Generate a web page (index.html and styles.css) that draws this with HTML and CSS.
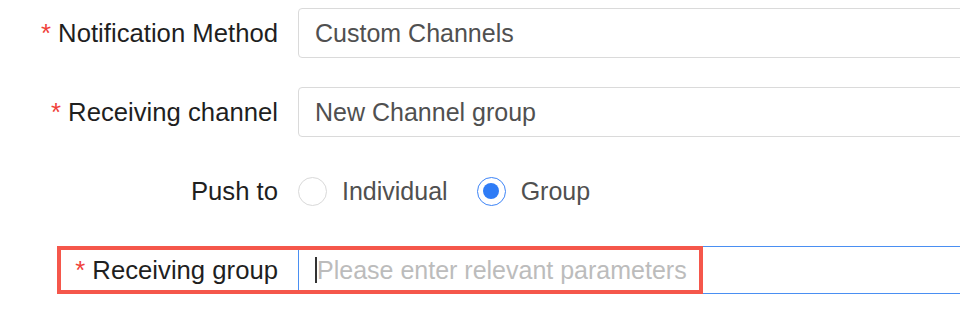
FILE: index.html
```html
<!DOCTYPE html>
<html>
<head>
    <title>Channel Settings</title>
    <link rel="stylesheet" href="styles.css">
</head>
<body>
    <form class="form">
        <div class="form-row">
            <label class="form-label"><span class="required">*</span>Notification Method</label>
            <div class="input">Custom Channels</div>
        </div>
        <div class="form-row">
            <label class="form-label"><span class="required">*</span>Receiving channel</label>
            <div class="input">New Channel group</div>
        </div>
        <div class="form-row">
            <label class="form-label">Push to</label>
            <div class="radio-group">
                <span class="radio"><span class="radio-circle"></span>Individual</span>
                <span class="radio"><span class="radio-circle checked"></span>Group</span>
            </div>
        </div>
        <div class="form-row form-row-last">
            <label class="form-label"><span class="required">*</span>Receiving group</label>
            <div class="input input-focus"><span class="caret"></span><span class="placeholder">Please enter relevant parameters</span></div>
            <div class="highlight"></div> <!-- annotation box -->
        </div>
    </form>
</body>
</html>
```

FILE: styles.css
```css
body {
    margin: 0;
    background-color: #fff;
    font-family: "Liberation Sans", Arial, sans-serif;
    font-size: 25.7px;
    color: #1f1f1f;
    overflow: hidden;
}
.form {
    display: flex;
    flex-direction: column;
    gap: 29px;
    padding-top: 8px;
}
.form-row {
    display: grid;
    grid-template-columns: 278px 700px;
    column-gap: 20px;
    align-items: center;
    height: 50px;
}
.form-row-last {
    position: relative;
}
.form-label {
    text-align: right;
    white-space: nowrap;
}
.required {
    color: #f0413a; /* Red asterisk */
    margin-right: 7px;
}
.input {
    box-sizing: border-box;
    height: 50px;
    display: flex;
    align-items: center;
    padding-left: 16px;
    border: 1px solid #dadada;
    border-radius: 4px;
    font-size: 25px;
    color: #505050;
    white-space: nowrap;
}
.input-focus {
    height: 48px;
    border-color: #4a8ff2;
    border-radius: 0;
}
.caret {
    display: inline-block;
    width: 2px;
    height: 26px;
    background-color: #333;
}
.placeholder {
    color: #bcbcbc;
}
.radio-group {
    display: flex;
    align-items: center;
    font-size: 25px;
    color: #505050;
}
.radio {
    display: flex;
    align-items: center;
    gap: 15px;
    margin-right: 29px;
}
.radio-circle {
    box-sizing: border-box;
    width: 29px;
    height: 29px;
    border: 1px solid #d9d9d9;
    border-radius: 50%;
    display: flex;
    align-items: center;
    justify-content: center;
}
.radio-circle.checked {
    border-color: #3d84f7;
}
.radio-circle.checked::after {
    content: "";
    width: 16px;
    height: 16px;
    border-radius: 50%;
    background-color: #2f7cf6;
}
.highlight {
    position: absolute;
    left: 57px;
    top: 1px;
    width: 646px;
    height: 48px;
    box-sizing: border-box;
    border: 4px solid #f5574b; /* Annotation outline */
}
```
